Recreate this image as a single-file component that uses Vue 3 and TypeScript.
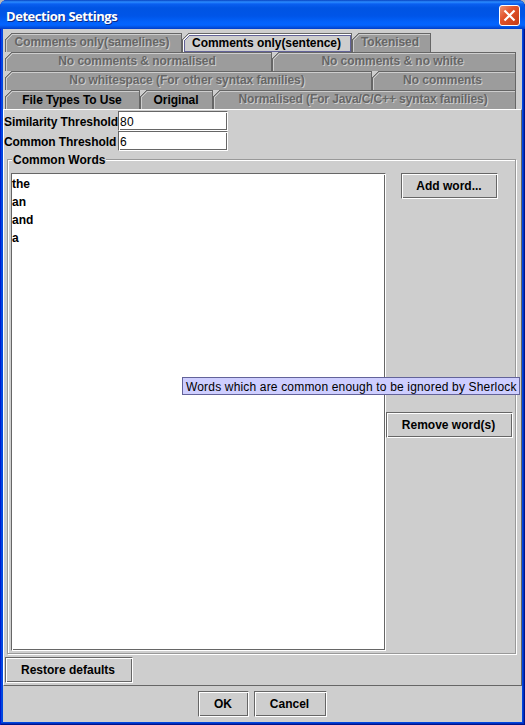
<script setup lang="ts">
interface Tab {
  label: string
  width: number
  cls: string
  enabled?: boolean
  selected?: boolean
}

const rows: Tab[][] = [
  [
    { label: 'Comments only(samelines)', width: 177, cls: 'same' },
    { label: 'Comments only(sentence)', width: 170, cls: 'sentence', enabled: true, selected: true },
    { label: 'Tokenised', width: 79, cls: 'token' },
  ],
  [
    { label: 'No comments & normalised', width: 267, cls: 'ncn' },
    { label: 'No comments & no white', width: 244, cls: 'ncw' },
  ],
  [
    { label: 'No whitespace (For other syntax families)', width: 367, cls: 'nws' },
    { label: 'No comments', width: 144, cls: 'nc' },
  ],
  [
    { label: 'File Types To Use', width: 135, cls: 'types', enabled: true },
    { label: 'Original', width: 73, cls: 'orig', enabled: true },
    { label: 'Normalised (For Java/C/C++ syntax families)', width: 303, cls: 'norm' },
  ],
]

const words: string[] = ['the', 'an', 'and', 'a']
</script>

<template>
  <div class="window">
    <header class="title-bar">
      <span class="title">Detection Settings</span>
      <button class="close" aria-label="Close">
        <svg width="21" height="21" viewBox="0 0 21 21">
          <defs>
            <linearGradient id="red" x1="0" y1="0" x2="1" y2="1">
              <stop offset="0" stop-color="#ee9678" />
              <stop offset=".4" stop-color="#e2532c" />
              <stop offset="1" stop-color="#c43a12" />
            </linearGradient>
          </defs>
          <rect x=".5" y=".5" width="20" height="20" rx="2.5" fill="url(#red)" stroke="#fff" />
          <path d="M5.5 5.5 15.5 15.5M15.5 5.5 5.5 15.5" stroke="#fff" stroke-width="2.2" />
        </svg>
      </button>
    </header>

    <main class="client">
      <nav class="tabs">
        <div v-for="(row, r) in rows" :key="r" class="tab-row">
          <div
            v-for="tab in row"
            :key="tab.label"
            class="tab"
            :class="[tab.cls, { enabled: tab.enabled, selected: tab.selected }]"
            :style="{ width: tab.width + 'px' }"
          >
            <svg class="shape" :width="tab.width" height="19" shape-rendering="crispEdges">
              <path class="face" :d="`M0 19V6L6 0H${tab.width}V19Z`" />
              <path class="edge" :d="`M.5 19V6.5L6.5 .5H${tab.width}`" />
              <path class="light" :d="`M1.5 19V7.5L7.5 1.5H${tab.width - 1}`" />
              <path class="edge" :d="`M${tab.width - 0.5} 1V19`" />
              <path v-if="tab.selected" class="focus" :d="`M2.5 18.5V7.5L7.5 2.5H${tab.width - 1.5}V18.5Z`" />
            </svg>
            <span class="tab-label">{{ tab.label }}</span>
          </div>
        </div>
      </nav>

      <section class="pane">
        <div class="field-row">
          <label class="sim">Similarity Threshold</label>
          <div class="field sunken">80</div>
        </div>
        <div class="field-row">
          <label class="com">Common Threshold</label>
          <div class="field sunken">6</div>
        </div>
        <div class="group">
          <span class="legend">Common Words</span>
          <ul class="list sunken">
            <li v-for="word in words" :key="word">{{ word }}</li>
          </ul>
          <div class="actions">
            <button class="btn add sunken">Add word...</button>
            <button class="btn remove sunken">Remove word(s)</button>
          </div>
        </div>
        <button class="btn restore sunken">Restore defaults</button>
      </section>

      <footer class="footer">
        <button class="btn ok sunken">OK</button>
        <button class="btn cancel sunken">Cancel</button>
      </footer>
    </main>
    <div class="tooltip">Words which are common enough to be ignored by Sherlock</div>
  </div>
</template>

<style>
body {
  background: #b8b8b8;
}
</style>

<style scoped>
* {
  box-sizing: border-box;
}
.window {
  position: relative;
  width: 525px;
  height: 725px;
  padding: 0 3px 3px;
  border-radius: 7px 7px 0 0;
  overflow: hidden;
  background: #0046e0;
  box-shadow: inset 1px 0 #0019cf, inset -1px -1px #00138c, inset -2px -2px #0030bd;
  font: bold 12px/14px "Liberation Sans", Arial, sans-serif;
  color: #000;
  white-space: nowrap;
}
.title-bar {
  display: flex;
  align-items: center;
  justify-content: space-between;
  height: 29px;
  margin: 0 -3px;
  padding: 2px 5px 0 6px;
  background: linear-gradient(#0842c0 0, #2b8cff 2px, #0a5ff0 4px, #0054e3 8px, #0055e8 16px, #0262fb 22px, #0364ff 25px, #0353e2 27px, #003dcb 29px);
}
.title {
  font: bold 13px/18px "Open Sans", "Noto Sans", sans-serif;
  color: #fff;
  text-shadow: 1px 1px #0b2b88;
  letter-spacing: -0.45px;
}
.close {
  width: 21px;
  height: 21px;
  padding: 0;
  border: 0;
  background: none;
}
.close svg {
  display: block;
}
.client {
  height: 693px;
  padding-top: 4px;
  background: #cecece;
}
.tabs {
  padding-left: 2px;
}
.tab-row {
  display: flex;
  height: 19px;
}
.tab {
  display: grid;
  height: 19px;
}
.shape,
.tab-label {
  grid-area: 1 / 1;
}
.shape {
  display: block;
}
.face {
  fill: #9c9c9c;
}
.edge,
.light,
.focus {
  fill: none;
  stroke: #666;
}
.light {
  stroke: #cecece;
}
.selected .face {
  fill: #cecece;
}
.selected .light {
  stroke: #fff;
}
.focus {
  stroke: #639;
  stroke: #636399;
}
.tab-label {
  justify-self: center;
  padding: 2px 3px 0 0;
  color: #666;
  text-shadow: 1px 1px #cecece;
  letter-spacing: -0.05px;
}
.norm .tab-label {
  letter-spacing: -0.1px;
}
.enabled .tab-label {
  padding: 3px 1px 0 0;
  color: #000;
  text-shadow: none;
}
.pane {
  height: 577px;
  padding: 1px 1px 0 1px;
  border-top: 1px solid #fff;
  border-left: 1px solid #fff;
  border-right: 1px solid #666;
  border-bottom: 1px solid #666;
}
.field-row {
  display: flex;
  height: 20px;
}
.field-row label {
  width: 113px;
  margin-left: -1px;
  padding-top: 4px;
  padding-right: 0;
  letter-spacing: -0.07px;
}
.field-row .field {
  margin-left: 1px;
}
.sunken {
  border: 1px solid;
  border-color: #666 #fff #fff #666;
  box-shadow: inset 1px 1px #fff, inset -1px -1px #666;
}
.field {
  width: 110px;
  height: 20px;
  padding: 3px 1px;
  background: #fff;
  font-weight: normal;
  letter-spacing: 0.3px;
}
.group {
  display: flex;
  position: relative;
  width: 509px;
  height: 495px;
  margin: 8px 0 0 2px;
  padding: 13px 2px 0 3px;
  border: 1px solid #999;
  box-shadow: inset 1px 1px #fff, 1px 1px #fff;
}
.legend {
  position: absolute;
  left: 4px;
  top: -7px;
  padding: 0 1px;
  background: #cecece;
}
.list {
  width: 375px;
  height: 478px;
  margin: 0;
  padding: 1px 0;
  list-style: none;
  background: #fff;
}
.list li {
  height: 18px;
  padding-top: 2px;
}
.actions {
  display: flex;
  flex-direction: column;
  align-items: flex-start;
}
.btn {
  height: 26px;
  padding: 0 1px 0 0;
  background: #cecece;
  color: #000;
  font: inherit;
  border-radius: 0;
}
.add {
  width: 97px;
  margin-left: 15px;
}
.remove {
  width: 127px;
  margin-top: 213px;
  padding-right: 2px;
}
.restore {
  display: block;
  width: 128px;
  margin-top: 3px;
  padding-right: 2px;
}
.footer {
  display: flex;
  justify-content: center;
  gap: 5px;
  padding-top: 5px;
}
.ok {
  width: 51px;
}
.cancel {
  width: 73px;
  padding-right: 2px;
}
.tooltip {
  position: absolute;
  left: 182px;
  top: 377px;
  width: 338px;
  height: 18px;
  padding: 2px 3px;
  border: 1px solid #636399;
  background: #ceceff;
  font-weight: normal;
  letter-spacing: 0.17px;
}
</style>
